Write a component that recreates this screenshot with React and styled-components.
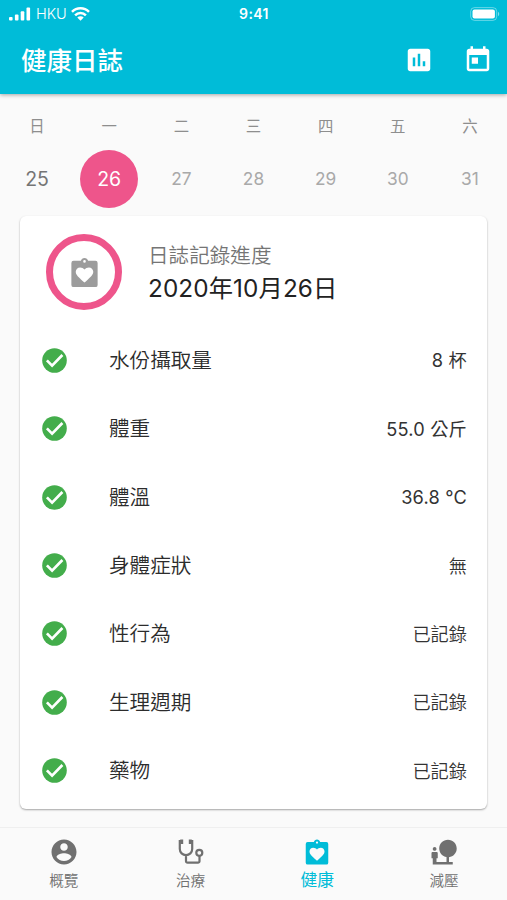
import React, { useState } from 'react';
import styled, { createGlobalStyle } from 'styled-components';

const GlobalStyle = createGlobalStyle`
  * {
    box-sizing: border-box;
  }
  body {
    margin: 0;
    background-color: #fafafa;
    font-family: Inter, "Noto Sans CJK TC", sans-serif;
  }
  button {
    border: none;
    padding: 0;
    background: none;
    font-family: inherit;
    cursor: pointer;
  }
  svg {
    display: block;
  }
`;

const Screen = styled.div`
  display: flex;
  flex-direction: column;
  width: 507px;
  height: 900px;
  overflow: hidden;
  background-color: #fafafa;
`;

const Header = styled.header`
  height: 94px;
  flex-shrink: 0;
  background-color: #00bcd8;
  color: white;
  box-shadow: 0 1px 4px rgba(0, 0, 0, 0.35);
`;

const StatusBar = styled.div`
  display: grid;
  grid-template-columns: 1fr auto 1fr;
  align-items: center;
  height: 27px;
  padding: 0 7px 0 9px;
`;

const Signal = styled.div`
  display: flex;
  align-items: center;
  gap: 5px;
`;

const Carrier = styled.span`
  font-size: 14.5px;
  line-height: 27px;
  font-weight: 300;
  letter-spacing: -0.1px;
`;

const Clock = styled.span`
  margin-right: 1px;
  font-size: 14px;
  line-height: 27px;
  font-weight: 600;
  letter-spacing: 0.4px;
`;

const Battery = styled.div`
  justify-self: end;
`;

const TitleBar = styled.div`
  display: flex;
  align-items: center;
  height: 65px;
  padding: 0 14.5px 0 21px;
`;

const Title = styled.h1`
  flex: 1;
  margin: 0;
  padding-top: 2px;
  font-size: 25.5px;
  line-height: 36px;
  font-weight: 500;
`;

const Actions = styled.div`
  display: flex;
  gap: 28.5px;
`;

const Week = styled.div`
  display: grid;
  grid-template-columns: repeat(7, 1fr);
  justify-items: center;
  height: 122px;
  flex-shrink: 0;
  padding: 17px 1px 0;
`;

const Day = styled.button`
  display: flex;
  flex-direction: column;
  align-items: center;
  gap: 9px;
`;

const DayName = styled.span`
  height: 30px;
  font-size: 15.4px;
  line-height: 32px;
  color: #8e8e8e;
`;

const DayNumber = styled.span`
  width: 58px;
  height: 58px;
  border-radius: 50%;
  font-size: ${(props) => (props.$future ? '17.3px' : '19.5px')};
  line-height: 58px;
  font-weight: 400;
  color: ${(props) => (props.$active ? 'white' : props.$future ? '#a9a9a9' : '#757575')};
  background-color: ${(props) => (props.$active ? '#ee558b' : 'transparent')};
`;

const Card = styled.section`
  height: 593px;
  flex-shrink: 0;
  margin: 0 20px;
  border-radius: 6px;
  background-color: white;
  box-shadow: 0 1px 2px rgba(0, 0, 0, 0.35);
`;

const CardHeader = styled.div`
  display: flex;
  align-items: center;
  gap: 26px;
  height: 110px;
  padding: 2px 26px 0;
`;

const Ring = styled.div`
  display: flex;
  align-items: center;
  justify-content: center;
  width: 76px;
  height: 76px;
  border: 7px solid #ee558b;
  border-radius: 50%;
  color: #9c9c9c;
`;

const CardTitles = styled.div`
  display: flex;
  flex-direction: column;
`;

const Subtitle = styled.span`
  font-size: 20.6px;
  line-height: 32px;
  font-weight: 350;
  color: #757575;
`;

const DateText = styled.span`
  font-size: 24.3px;
  line-height: 32px;
  font-weight: 400;
  letter-spacing: 0.1px;
  color: #222;
`;

const Row = styled.div`
  display: flex;
  align-items: center;
  height: 68.45px;
  padding: 0 20px 0 22px;
`;

const Label = styled.span`
  flex: 1;
  margin-left: 42px;
  padding-top: 1px;
  font-size: 20.6px;
  line-height: 32px;
  font-weight: 350;
  color: #2c2c2c;
`;

const Value = styled.span`
  font-size: 18.2px;
  line-height: 28px;
  font-weight: ${(props) => (props.$numeric ? 400 : 350)};
  letter-spacing: ${(props) => (props.$numeric ? '0.2px' : '0')};
  color: #333;
`;

const BottomNav = styled.nav`
  display: grid;
  grid-template-columns: repeat(4, 1fr);
  height: 73px;
  margin-top: auto;
  border-top: 1px solid #efefef;
  background-color: #fafafa;
`;

const NavItem = styled.button`
  display: flex;
  flex-direction: column;
  align-items: center;
  padding: 9px 0 0 1px;
  color: ${(props) => (props.$active ? '#00bcd8' : '#707070')};
`;

const NavLabel = styled.span`
  height: 24px;
  padding-top: ${(props) => (props.$active ? '0' : '1px')};
  font-size: ${(props) => (props.$active ? '16.8px' : '14.6px')};
  line-height: 26px;
  font-weight: ${(props) => (props.$active ? 400 : 350)};
`;

const Icon = ({ d, size = 30 }) => (
  <svg width={size} height={size} viewBox="0 0 24 24" fill="currentColor">
    <path d={d} />
  </svg>
);

const CHART =
  'M19 3H5c-1.1 0-2 .9-2 2v14c0 1.1.9 2 2 2h14c1.1 0 2-.9 2-2V5c0-1.1-.9-2-2-2zM9 17H7v-7h2v7zm4 0h-2V7h2v10zm4 0h-2v-4h2v4z';
const TODAY =
  'M19 3h-1V1h-2v2H8V1H6v2H5c-1.11 0-1.99.9-1.99 2L3 19c0 1.1.89 2 2 2h14c1.1 0 2-.9 2-2V5c0-1.1-.9-2-2-2zm0 16H5V8h14v11zM7 10h5v5H7z';
const ACCOUNT =
  'M12 2C6.48 2 2 6.48 2 12s4.48 10 10 10 10-4.48 10-10S17.52 2 12 2zm0 3c1.66 0 3 1.34 3 3s-1.34 3-3 3-3-1.34-3-3 1.34-3 3-3zm0 14.2c-2.5 0-4.71-1.28-6-3.22.03-1.99 4-3.08 6-3.08 1.99 0 5.97 1.09 6 3.08-1.29 1.94-3.5 3.22-6 3.22z';
const NATURE =
  'M22.17 9.17c0-3.87-3.13-7-7-7s-7 3.13-7 7c0 3.47 2.52 6.34 5.83 6.89V20H6v-3h1v-4c0-.55-.45-1-1-1H3c-.55 0-1 .45-1 1v4h1v5h16v-2h-3v-3.88c3.47-.41 6.17-3.36 6.17-6.95zM4.5 11c.83 0 1.5-.67 1.5-1.5S5.33 8 4.5 8 3 8.67 3 9.5 3.67 11 4.5 11z';

const ClipboardHeart = ({ size = 30 }) => (
  <svg width={size} height={size} viewBox="0 0 24 24" fill="currentColor" fillRule="evenodd">
    <path d="M4.500 4h5c.3-1.200 1.300-2 2.500-2s2.200.800 2.500 2h5A1.500 1.500 0 0 1 21 5.500v15a1.500 1.500 0 0 1-1.500 1.500h-15A1.500 1.500 0 0 1 3 20.500v-15A1.500 1.500 0 0 1 4.500 4zM12 3.500a.9.900 0 1 0 0 1.800.9.900 0 0 0 0-1.800zM12 18.900l-.9-.8C7.900 15.300 6 13.600 6 11.500 6 9.800 7.300 8.500 9 8.500c1.200 0 2.300.600 3 1.500.700-.900 1.800-1.500 3-1.500 1.700 0 3 1.300 3 3 0 2.100-1.900 3.800-5.100 6.600z" />
  </svg>
);

const Stethoscope = () => (
  <svg width="30" height="30" viewBox="0 0 30 30" fill="none" stroke="currentColor" strokeWidth="2.200">
    <path d="M6 4H3.800v8a6.200 6.200 0 0 0 12.400 0V4H14M10 18v6.200a1.500 1.500 0 0 0 1.500 1.500h10.500a1.500 1.500 0 0 0 1.500-1.500V19" />
    <path d="M5.700 2.600v4.400M14.300 2.600v4.400" strokeWidth="3" />
    <circle cx="23.300" cy="15.800" r="3" />
  </svg>
);

const CheckCircle = () => (
  <svg width="25" height="25" viewBox="0 0 25 25">
    <circle cx="12.500" cy="12.500" r="12.300" fill="#43ad4b" />
    <path d="M4.900 12.400l5.200 5.200 10.300-10.600" fill="none" stroke="white" strokeWidth="2.700" />
  </svg>
);

const SignalBars = () => (
  <svg width="22" height="14" viewBox="0 0 22 14" fill="white">
    <rect x="0" y="10" width="3.600" height="3.600" rx="1" />
    <rect x="5.900" y="7.600" width="3.600" height="6" rx="1" />
    <rect x="11.700" y="4.300" width="3.600" height="9.300" rx="1" />
    <rect x="17.500" y="0.500" width="3.600" height="13.100" rx="1" />
  </svg>
);

const Wifi = () => (
  <svg width="19" height="14" viewBox="0 0 19 14" fill="none" stroke="white" strokeWidth="2.500">
    <path d="M1 4.800a12 12 0 0 1 17 0" />
    <path d="M4.100 8.300a7.600 7.600 0 0 1 10.800 0" />
    <path d="M6.300 10.600a4.500 4.500 0 0 1 6.400 0L9.500 13.800z" fill="white" stroke="none" />
  </svg>
);

const BatteryIcon = () => (
  <svg width="30" height="14" viewBox="0 0 30 14">
    <rect x="0.700" y="0.600" width="26" height="12.800" rx="3.800" fill="none" stroke="white" strokeOpacity="0.4" />
    <rect x="2.500" y="2.400" width="22.400" height="9.200" rx="2" fill="white" />
    <path d="M28 4.800c1.700.800 1.700 3.600 0 4.400z" fill="white" fillOpacity="0.500" />
  </svg>
);

const days = [
  { name: '日', date: 25 },
  { name: '一', date: 26 },
  { name: '二', date: 27 },
  { name: '三', date: 28 },
  { name: '四', date: 29 },
  { name: '五', date: 30 },
  { name: '六', date: 31 },
];

const records = [
  { label: '水份攝取量', value: '8 杯', numeric: true },
  { label: '體重', value: '55.0 公斤', numeric: true },
  { label: '體溫', value: '36.8 °C', numeric: true },
  { label: '身體症狀', value: '無' },
  { label: '性行為', value: '已記錄' },
  { label: '生理週期', value: '已記錄' },
  { label: '藥物', value: '已記錄' },
];

const tabs = [
  { label: '概覽', icon: <Icon d={ACCOUNT} /> },
  { label: '治療', icon: <Stethoscope /> },
  { label: '健康', icon: <ClipboardHeart /> },
  { label: '減壓', icon: <Icon d={NATURE} /> },
];

function App() {
  const [selected, setSelected] = useState(26);
  const [tab, setTab] = useState('健康');

  return (
    <Screen>
      <GlobalStyle />
      <Header>
        <StatusBar>
          <Signal>
            <SignalBars />
            <Carrier>HKU</Carrier>
            <Wifi />
          </Signal>
          <Clock>9:41</Clock>
          <Battery>
            <BatteryIcon />
          </Battery>
        </StatusBar>
        <TitleBar>
          <Title>健康日誌</Title>
          <Actions>
            <Icon d={CHART} />
            <Icon d={TODAY} />
          </Actions>
        </TitleBar>
      </Header>
      <Week>
        {days.map((day) => (
          <Day key={day.date} onClick={() => setSelected(day.date)}>
            <DayName>{day.name}</DayName>
            <DayNumber $active={day.date === selected} $future={day.date > 26}>
              {day.date}
            </DayNumber>
          </Day>
        ))}
      </Week>
      <Card>
        <CardHeader>
          <Ring>
            <ClipboardHeart size={35} />
          </Ring>
          <CardTitles>
            <Subtitle>日誌記錄進度</Subtitle>
            <DateText>2020年10月26日</DateText>
          </CardTitles>
        </CardHeader>
        {records.map((record) => (
          <Row key={record.label}>
            <CheckCircle />
            <Label>{record.label}</Label>
            <Value $numeric={record.numeric}>{record.value}</Value>
          </Row>
        ))}
      </Card>
      <BottomNav>
        {tabs.map((item) => (
          <NavItem key={item.label} $active={item.label === tab} onClick={() => setTab(item.label)}>
            {item.icon}
            <NavLabel $active={item.label === tab}>{item.label}</NavLabel>
          </NavItem>
        ))}
      </BottomNav>
    </Screen>
  );
}

export default App;
